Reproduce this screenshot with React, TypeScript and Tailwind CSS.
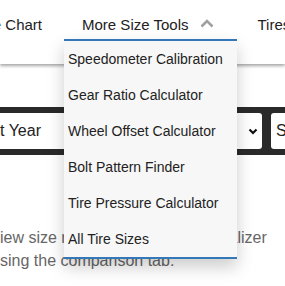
import React from 'react';

const tools = [
  'Speedometer Calibration',
  'Gear Ratio Calculator',
  'Wheel Offset Calculator',
  'Bolt Pattern Finder',
  'Tire Pressure Calculator',
  'All Tire Sizes',
];

const ChevronUp = () => (
  <svg width="14" height="9" viewBox="0 0 14 9" className="block">
    <polyline points="1.5,7.5 7,2 12.5,7.5" fill="none" stroke="#a0a0a0" strokeWidth="2.6" />
  </svg>
);

const ChevronDown = () => (
  <svg width="10" height="7" viewBox="0 0 10 7" className="block">
    <polyline points="1.5,1.5 5,5 8.5,1.5" fill="none" stroke="#111" strokeWidth="2.2" />
  </svg>
);

export default function App() {
  return (
    <div className="relative w-[285px] h-[286px] overflow-hidden bg-white font-['Liberation_Sans',Arial,sans-serif]">
      <nav className="h-16 bg-white shadow-[0_2px_3px_rgba(0,0,0,0.35)] flex items-start pt-4 text-[15px] leading-[18px] text-[#222] whitespace-nowrap relative z-10">
        <span className="-ml-[28px]">Size Chart</span>
        <span className="ml-[40px]">More Size Tools</span>
        <span className="ml-[12px] mt-[3px]">
          <ChevronUp />
        </span>
        <span className="ml-[43px]">Tires</span>
      </nav>

      <div className="mt-[43px] bg-[#2a2a2a] py-[6px] flex gap-[9px] text-[16px] text-[#222] whitespace-nowrap">
        <div className="-ml-[52px] w-[314px] shrink-0 h-9 bg-white rounded-[3px] flex items-center justify-between pl-[12px] pr-[4px]">
          <span>Select Year</span>
          <ChevronDown />
        </div>
        <div className="w-[200px] shrink-0 h-9 bg-white rounded-[3px] flex items-center pl-[5px]">
          <span>Select Make</span>
        </div>
      </div>

      <div className="mt-[71px] text-[16px] leading-[23px] text-[#666] whitespace-nowrap">
        <div>iew size results with our tire visualizer</div>
        <div>sing the comparison tab.</div>
      </div>

      <div className="absolute left-[64px] top-[39px] w-[173px] bg-[#f7f7f7] border-y-2 border-[#3578b8] shadow-[0_8px_16px_0_rgba(0,0,0,0.2)] z-20">
        {tools.map((t) => (
          <div key={t} className="h-9 flex items-center px-[4px] text-[14px] text-[#222] whitespace-nowrap">
            {t}
          </div>
        ))}
      </div>
    </div>
  );
}
